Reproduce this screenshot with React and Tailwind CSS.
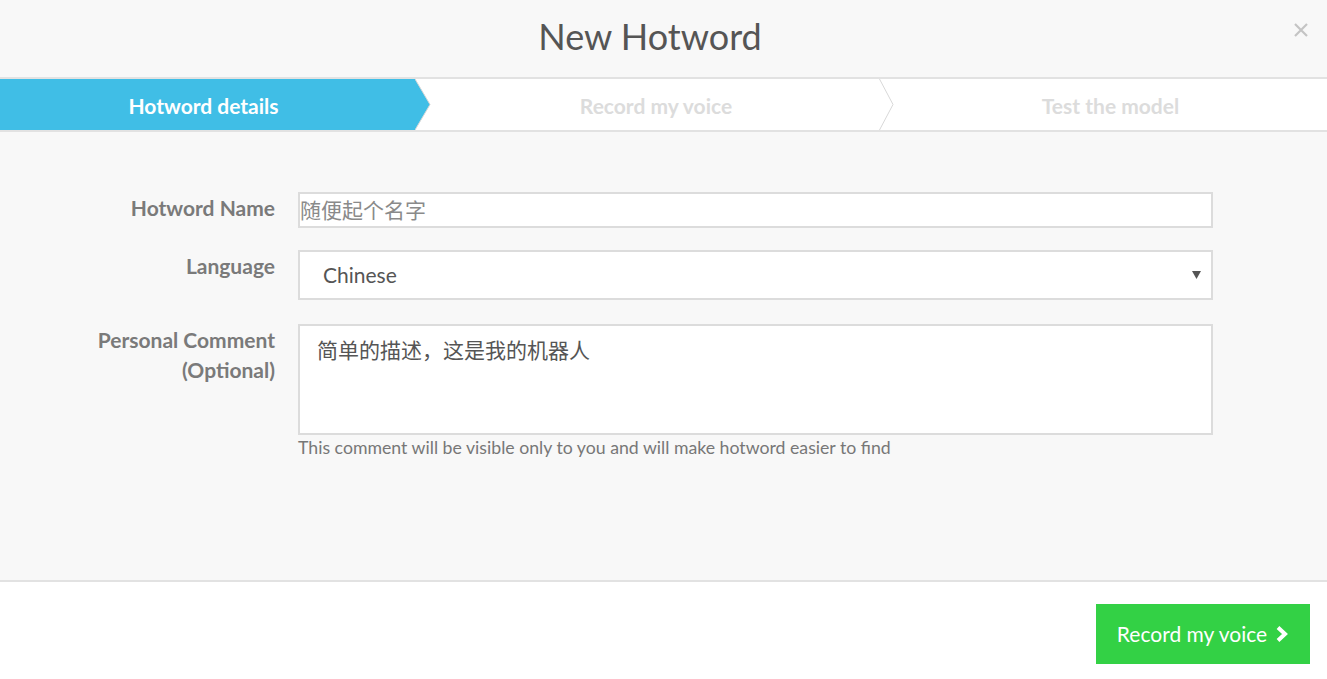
const font = { fontFamily: 'Lato, "Noto Sans CJK SC", sans-serif' };

const Close = () => (
  <svg width="16" height="16" viewBox="0 0 16 16" className="text-[#c4c4c4]">
    <path d="M2 2 L14 14 M14 2 L2 14" stroke="currentColor" strokeWidth="2.2" fill="none" />
  </svg>
);

const Chevron = () => (
  <svg width="14" height="18" viewBox="0 0 14 18">
    <polyline points="3,2.5 10,9 3,15.5" fill="none" stroke="currentColor" strokeWidth="4" strokeLinejoin="miter" />
  </svg>
);

const Steps = () => (
  <div className="h-[55px] bg-white border-y-2 border-[#e2e2e2] flex">
    <div className="flex h-full">
      <div className="w-[415px] h-full bg-[#40bee6] flex items-center justify-center pt-[2px]">
        <span className="text-white font-bold text-[21px] pr-[8px]">Hotword details</span>
      </div>
      <svg width="16" height="51" viewBox="0 0 16 51" className="block">
        <polygon points="0,0 15,25.5 0,51" fill="#40bee6" />
        <polyline points="0,0 15,25.5 0,51" fill="none" stroke="#d6d6d6" strokeWidth="1" />
      </svg>
    </div>
    <div className="w-[448px] flex items-center justify-center pt-[2px]">
      <span className="text-[#dcdcdc] font-bold text-[21px] pl-[2px]">Record my voice</span>
    </div>
    <svg width="15" height="51" viewBox="0 0 15 51" className="block">
      <polyline points="0.5,0 14,25.5 0.5,51" fill="none" stroke="#d8d8d8" strokeWidth="1" />
    </svg>
    <div className="flex-1 flex items-center justify-center pt-[2px]">
      <span className="text-[#dcdcdc] font-bold text-[21px]">Test the model</span>
    </div>
  </div>
);

const Row = ({ label, children }) => (
  <div className="flex items-start">
    <div className="w-[275px] text-right text-[#7a7a7a] font-bold text-[21px] leading-[30px] pt-[1px]">
      {label}
    </div>
    <div className="ml-[23px] w-[915px]">{children}</div>
  </div>
);

export default function App() {
  return (
    <div className="w-[1327px] h-[679px] flex flex-col bg-[#f8f8f8] overflow-hidden" style={font}>
      <header className="h-[77px] relative flex items-center justify-center pr-[27px]">
        <h1 className="text-[36px] text-[#555] font-normal leading-none pb-[6px]">New Hotword</h1>
        <button className="absolute right-[18px] top-[22px]">
          <Close />
        </button>
      </header>

      <Steps />

      <main className="flex-1 pt-[60px] flex flex-col gap-[22px]">
        <Row label="Hotword Name">
          <div className="h-[36px] bg-white border-2 border-[#dcdcdc] flex items-center text-[21px] text-[#8a8a8a]">
            随便起个名字
          </div>
        </Row>
        <Row label="Language">
          <div className="h-[50px] bg-white border-2 border-[#dcdcdc] flex items-center justify-between pl-[23px] pr-[10px] text-[21px] text-[#555]">
            <span>Chinese</span>
            <svg width="9" height="8" viewBox="0 0 9 8">
              <polygon points="0,0 9,0 4.5,8" fill="#555" />
            </svg>
          </div>
        </Row>
        <div className="mt-[2px]">
          <Row label={<>Personal Comment<br />(Optional)</>}>
            <div className="h-[111px] bg-white border-2 border-[#dcdcdc] px-[17px] pt-[9px] text-[21px] text-[#555] leading-[30px]">
              简单的描述，这是我的机器人
            </div>
            <p className="text-[17.7px] text-[#777] mt-[2px] leading-[22px]">
              This comment will be visible only to you and will make hotword easier to find
            </p>
          </Row>
        </div>
      </main>

      <footer className="h-[99px] bg-white border-t-2 border-[#e2e2e2] flex justify-end items-start pt-[22px] pr-[17px]">
        <button className="w-[214px] h-[60px] bg-[#33d145] text-white text-[21px] flex items-center justify-center gap-[8px]">
          <span>Record my voice</span>
          <Chevron />
        </button>
      </footer>
    </div>
  );
}
